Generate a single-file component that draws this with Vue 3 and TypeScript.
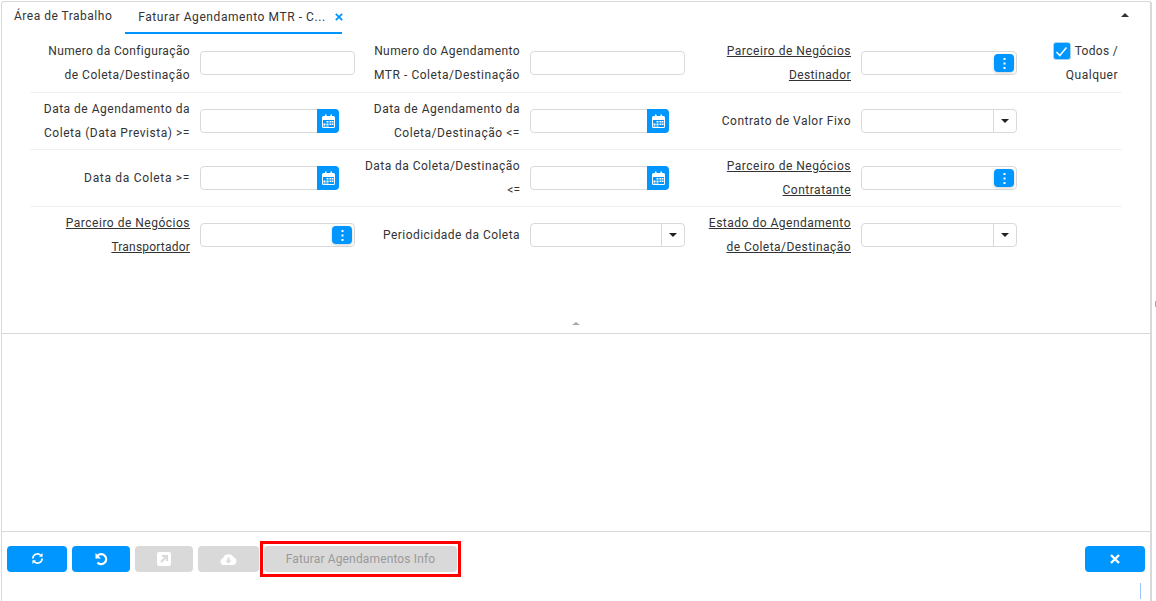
<script setup lang="ts">
type Kind = 'text' | 'date' | 'dots' | 'select'
interface Line { text: string; spacing?: number }
interface Cell { lines: Line[]; link?: boolean; kind: Kind }
const rows: Cell[][] = [
  [
    { lines: [{ text: 'Numero da Configuração', spacing: 0.36 }, { text: 'de Coleta/Destinação' }], kind: 'text' },
    { lines: [{ text: 'Numero do Agendamento', spacing: 0.4 }, { text: 'MTR - Coleta/Destinação', spacing: 0.54 }], kind: 'text' },
    { lines: [{ text: 'Parceiro de Negócios' }, { text: 'Destinador', spacing: 0.4 }], link: true, kind: 'dots' },
  ],
  [
    { lines: [{ text: 'Data de Agendamento da' }, { text: 'Coleta (Data Prevista) >=', spacing: 0.54 }], kind: 'date' },
    { lines: [{ text: 'Data de Agendamento da' }, { text: 'Coleta/Destinação <=', spacing: 0.55 }], kind: 'date' },
    { lines: [{ text: 'Contrato de Valor Fixo' }], kind: 'select' },
  ],
  [
    { lines: [{ text: 'Data da Coleta >=', spacing: 0.68 }], kind: 'date' },
    { lines: [{ text: 'Data da Coleta/Destinação', spacing: 0.46 }, { text: '<=', spacing: 0 }], kind: 'date' },
    { lines: [{ text: 'Parceiro de Negócios' }, { text: 'Contratante' }], link: true, kind: 'dots' },
  ],
  [
    { lines: [{ text: 'Parceiro de Negócios' }, { text: 'Transportador', spacing: 0.2 }], link: true, kind: 'dots' },
    { lines: [{ text: 'Periodicidade da Coleta', spacing: 0.45 }], kind: 'select' },
    { lines: [{ text: 'Estado do Agendamento' }, { text: 'de Coleta/Destinação', spacing: 0.45 }], link: true, kind: 'select' },
  ],
]
const spacingOf = (line: Line) => ({ letterSpacing: `${line.spacing ?? 0.5}px` })
</script>

<template>
  <div class="page">
    <section class="filters">
      <header class="tabs">
        <span class="tab">Área de Trabalho</span>
        <span class="tab active">
          <span class="tab-title">Faturar Agendamento MTR - C...</span>
          <svg class="tab-close" width="8" height="8" viewBox="0 0 8 8"><path d="M.8.8l6.400 6.400M7.200.8L.8 7.200" stroke="#0096ff" stroke-width="1.800" /></svg>
        </span>
        <span class="collapse-top"></span>
      </header>

      <div v-for="(row, r) in rows" :key="r" class="row" :class="{ first: r === 0, last: r === rows.length - 1 }">
        <template v-for="(cell, c) in row" :key="c">
          <div class="label" :class="{ link: cell.link }">
            <span v-for="line in cell.lines" :key="line.text" class="line"><span class="line-text" :style="spacingOf(line)">{{ line.text }}</span></span>
          </div>
          <div class="field-wrap">
            <div v-if="cell.kind === 'text'" class="field"></div>
            <div v-else-if="cell.kind === 'date'" class="field date">
              <span class="date-btn">
                <svg width="13" height="14" viewBox="0 0 13 14">
                  <path fill="#fff" d="M0 3.500Q0 2 1.500 2H3V.5h1.500V2h4V.5H10V2h1.500Q13 2 13 3.500V12.500Q13 14 11.500 14H1.500Q0 14 0 12.500Z" />
                  <path fill="#0096ff" d="M1 6h11v6.500q0 .5-.5.5h-10q-.5 0-.5-.5Z" />
                  <path fill="#fff" d="M4.500 7h2v1.500h-2zM7.500 7h2v1.500h-2zM10 7h1.500v1.500H10zM1.500 9.500h2V11h-2zM4.500 9.500h2V11h-2zM7.500 9.500h2V11h-2zM10 9.500h1.500V11H10zM1.500 11.500h2v1h-2zM4.500 11.500h2v1h-2z" />
                </svg>
              </span>
            </div>
            <div v-else-if="cell.kind === 'dots'" class="field dots">
              <span class="dots-btn">
                <svg width="3" height="11" viewBox="0 0 3 11"><path fill="#fff" d="M.5 0h2v2h-2zM.5 4.500h2v2h-2zM.5 9h2v2h-2z" /></svg>
              </span>
            </div>
            <div v-else class="field select">
              <span class="select-btn"><i class="caret"></i></span>
            </div>
          </div>
        </template>
        <div v-if="r === 0" class="todos">
          <span class="todos-line">
            <span class="check">
              <svg width="13" height="11" viewBox="0 0 13 11"><path d="M1.500 6l3.300 3.500L11.500 1.500" fill="none" stroke="#fff" stroke-width="1.500" /></svg>
            </span>
            <span class="todos-text">Todos /</span>
          </span>
          <span class="todos-line">Qualquer</span>
        </div>
      </div>

      <span class="splitter-caret"></span>
    </section>

    <section class="grid-area"></section>

    <footer class="toolbar">
      <button class="btn primary w60">
        <svg width="13" height="13" viewBox="0 0 14 14"><path d="M2 7a5 5 0 0 1 8.500-3.500M12 7a5 5 0 0 1-8.500 3.500" fill="none" stroke="#fff" stroke-width="1.800" /><path fill="#fff" d="M12.500 1v4h-4zM1.500 13V9h4z" /></svg>
      </button>
      <button class="btn primary w58">
        <svg width="15" height="14" viewBox="0 0 14 14"><path d="M3.200 3.500A5 5 0 1 1 3 10.500" fill="none" stroke="#fff" stroke-width="2.200" /><path fill="#fff" d="M1 1v5.500h5.500z" /></svg>
      </button>
      <button class="btn off w58">
        <svg width="14" height="14" viewBox="0 0 14 14"><rect width="14" height="14" rx="2" fill="#fff" /><path d="M4 10l5-5M5 4h5v5" fill="none" stroke="#d9d9d9" stroke-width="2" /></svg>
      </button>
      <button class="btn off w61">
        <svg width="17" height="12" viewBox="0 0 17 12"><path fill="#fff" d="M4 12a3.500 3.500 0 0 1-.8-6.900A4.500 4.500 0 0 1 9 1.500a3.500 3.500 0 0 1 4.300 2.800A3.900 3.900 0 0 1 13 12Z" /><path fill="#d9d9d9" d="M7.500 4.500h2v3h2l-3 3-3-3h2z" /></svg>
      </button>
      <span class="highlight">
        <button class="btn off text">Faturar Agendamentos Info</button>
      </span>
      <button class="btn primary w60 close">
        <svg width="10" height="10" viewBox="0 0 10 10"><path d="M1 1l8 8M9 1l-8 8" stroke="#fff" stroke-width="2.400" /></svg>
      </button>
    </footer>
    <span class="cursor-line"></span>
    <span class="edge-mark"></span>
  </div>
</template>

<style>
html, body { margin: 0; background: #fff; overflow: hidden; }
</style>

<style scoped>
.page {
  position: relative;
  width: 1156px;
  height: 601px;
  box-sizing: border-box;
  padding: 1px 4px 0 1px;
  font-family: Roboto, "Liberation Sans", sans-serif;
  font-size: 12px;
  letter-spacing: 0.5px;
  color: #333;
  overflow: hidden;
}
.filters {
  position: relative;
  height: 332px;
  box-sizing: border-box;
  border: 1px solid #d9d9d9;
  border-right-width: 2px;
  border-bottom: 0;
  border-radius: 3px 3px 0 0;
}
.tabs {
  position: relative;
  display: flex;
  height: 32px;
  padding-left: 12px;
}
.tab {
  height: 30px;
  line-height: 29px;
  white-space: nowrap;
}
.tab.active {
  margin-left: 13px;
  padding-left: 13px;
  width: 217px;
  box-sizing: border-box;
  height: 32px;
  border-bottom: 2px solid #0096ff;
  display: flex;
  align-items: center;
}
.tab-title { letter-spacing: 0.57px; }
.tab-close { margin-left: 9px; margin-top: -1px; flex: none; }
.collapse-top {
  position: absolute;
  left: 1119px;
  top: 11px;
  border: 4px solid transparent;
  border-top: 0;
  border-bottom: 4px solid #333;
}
.row {
  display: grid;
  grid-template-columns: 170px 155px 175px 155px 176px 156px 105px;
  margin-left: 28px;
  width: 1092px;
  height: 57px;
  padding-top: 4px;
  box-sizing: border-box;
  border-bottom: 1px solid #f0f0f0;
}
.row.first { height: 59px; padding-top: 5px; }
.row.last { border-bottom: 0; }
.label {
  padding-right: 10px;
  display: flex;
  flex-direction: column;
  justify-content: center;
  height: 48px;
  text-align: right;
}
.line { display: block; line-height: 24px; white-space: nowrap; }
.label.link .line-text { text-decoration: underline; }
.field-wrap { display: flex; align-items: center; height: 48px; }
.field {
  box-sizing: border-box;
  position: relative;
  width: 155px;
  height: 24px;
  background: #fff;
  border: 1px solid #d9d9d9;
  border-radius: 4px;
}
.field.date { width: 139px; }
.date-btn {
  position: absolute;
  right: -1px;
  top: -1px;
  width: 22px;
  height: 24px;
  background: #0096ff;
  border-radius: 0 4px 4px 0;
  display: flex;
  align-items: center;
  justify-content: center;
}
.dots-btn {
  position: absolute;
  right: 2px;
  top: 2px;
  width: 20px;
  height: 18px;
  background: #0096ff;
  border-radius: 4px;
  display: flex;
  align-items: center;
  justify-content: center;
  box-shadow: 0 1px 3px rgba(0, 0, 0, 0.2);
}
.select-btn {
  position: absolute;
  right: 0;
  top: 0;
  bottom: 0;
  width: 22px;
  border-left: 1px solid #d9d9d9;
  display: flex;
  align-items: center;
  justify-content: center;
}
.caret {
  border: 4px solid transparent;
  border-bottom: 0;
  border-top: 4px solid #222;
}
.field-wrap:nth-child(6n) .field { width: 156px; }
.todos {
  display: flex;
  flex-direction: column;
  align-items: flex-end;
  padding-right: 4px;
  height: 48px;
}
.todos-line {
  display: flex;
  align-items: center;
  line-height: 24px;
  height: 24px;
  white-space: nowrap;
}
.todos-text { letter-spacing: 0.3px; }
.check {
  width: 18px;
  height: 18px;
  box-sizing: border-box;
  margin-right: 4px;
  background: #0096ff;
  border: 1px solid #a9d3f2;
  border-radius: 3px;
  display: flex;
  align-items: center;
  justify-content: center;
}
.splitter-caret {
  position: absolute;
  left: 570px;
  top: 320px;
  border: 4px solid transparent;
  border-top: 0;
  border-bottom: 3px solid #aaa;
}
.grid-area {
  height: 198px;
  box-sizing: border-box;
  border: 1px solid #d9d9d9;
  border-right-width: 2px;
  border-bottom: 0;
}
.toolbar {
  display: flex;
  align-items: center;
  gap: 5px;
  height: 70px;
  box-sizing: border-box;
  border: 1px solid #d9d9d9;
  border-right-width: 2px;
  border-bottom: 0;
  padding: 14px 5px 30px 5px;
}
.btn {
  box-sizing: border-box;
  height: 26px;
  border: 0;
  padding: 0;
  border-radius: 4px;
  font: inherit;
  letter-spacing: inherit;
  display: flex;
  align-items: center;
  justify-content: center;
}
.primary { background: #0096ff; }
.off { background: #d9d9d9; color: #999; }
.w60 { width: 60px; }
.w58 { width: 58px; }
.w61 { width: 61px; }
.highlight {
  box-sizing: border-box;
  width: 201px;
  height: 36px;
  margin-left: -4px;
  border: 3px solid #f00;
  padding: 2px 1px;
}
.text { width: 193px; letter-spacing: 0.14px; }
.close { margin-left: auto; }
.cursor-line {
  position: absolute;
  left: 1140px;
  top: 583px;
  width: 1px;
  height: 16px;
  background: #9ec5fb;
}
.edge-mark {
  position: absolute;
  left: 1155px;
  top: 301px;
  width: 1px;
  height: 6px;
  background: #aaa;
}
</style>
